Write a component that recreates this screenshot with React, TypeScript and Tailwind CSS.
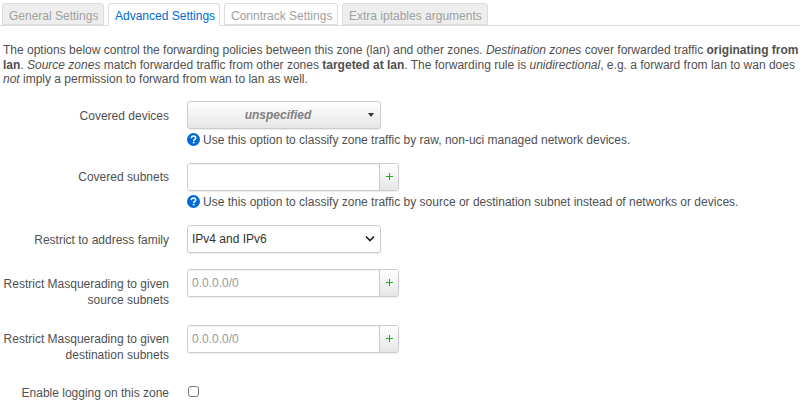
const FONT = "font-['Liberation_Sans',Arial,sans-serif]";

function Tab({ label, state, width }: { label: string; state: "active" | "idle" | "white"; width: string }) {
  if (state === "active") {
    return (
      <div className={`h-[23px] -mb-px pl-[6px] pt-[4px] rounded-t-[3px] border border-[#ddd] border-b-white bg-white text-[#0069d6] leading-[16px] whitespace-nowrap ${width}`}>
        {label}
      </div>
    );
  }
  return (
    <div className={`h-[22px] pl-[6px] pt-[4px] rounded-t-[3px] border border-[#ddd] text-[#a0a0a0] leading-[16px] whitespace-nowrap ${width} ${state === "white" ? "bg-white" : "bg-[#eeeeee]"}`}>
      {label}
    </div>
  );
}

function Row({ label, children, className, labelClass }: { label: React.ReactNode; children: React.ReactNode; className?: string; labelClass?: string }) {
  return (
    <div className={`flex ${className ?? ""}`}>
      <div className={`w-[169px] shrink-0 text-right text-[#505050] leading-[16.5px] whitespace-nowrap ${labelClass ?? "pt-[6px]"}`}>{label}</div>
      <div className="ml-[18px]">{children}</div>
    </div>
  );
}

function Help({ text }: { text: string }) {
  return (
    <div className="flex items-center h-[14px] mt-[4px] text-[#505050] whitespace-nowrap">
      <svg width="13" height="13" viewBox="0 0 13 13" className="shrink-0 mr-[3px]">
        <circle cx="6.5" cy="6.5" r="6.5" fill="#0069d6" />
        <path d="M4.3 5.1C4.4 3.8 5.3 3.1 6.5 3.1C7.8 3.1 8.7 3.8 8.7 4.9C8.7 6.4 6.7 6.4 6.7 7.9" fill="none" stroke="#fff" strokeWidth="1.5" />
        <rect x="5.8" y="8.8" width="1.7" height="1.6" fill="#fff" />
      </svg>
      {text}
    </div>
  );
}

function AddInput({ placeholder }: { placeholder?: string }) {
  return (
    <div className="flex w-[212px] h-[28px] rounded-[3px] border border-[#ccc] shadow-[0_1px_1px_rgba(0,0,0,0.08)] overflow-hidden">
      <div className="w-[191px] px-[4px] leading-[26px] text-[#999] bg-white shadow-[inset_0_1px_2px_rgba(0,0,0,0.06)]">{placeholder}</div>
      <div className="flex-1 border-l border-[#ccc] bg-gradient-to-b from-white to-[#e6e6e6] flex items-center justify-center">
        <svg width="9" height="9" viewBox="0 0 9 9">
          <path d="M4.5 1V8M1 4.5H8" stroke="#2ea62e" strokeWidth="1" fill="none" />
        </svg>
      </div>
    </div>
  );
}

export default function App() {
  return (
    <div className={`w-[800px] h-[404px] overflow-hidden bg-white text-[12px] ${FONT}`}>
      <div className="flex gap-[4px] h-[26px] pt-[3px] pl-[2px] border-b border-[#ddd]">
        <Tab label="General Settings" state="idle" width="w-[102px]" />
        <Tab label="Advanced Settings" state="active" width="w-[112px]" />
        <Tab label="Conntrack Settings" state="white" width="w-[114px]" />
        <Tab label="Extra iptables arguments" state="idle" width="w-[146px]" />
      </div>

      <p className="mt-[17px] pl-[3px] w-[800px] text-[#505050] leading-[14.5px] whitespace-nowrap">
        The options below control the forwarding policies between this zone (lan) and other zones. <em>Destination zones</em> cover forwarded traffic <strong>originating from</strong>
        <br />
        <strong>lan</strong>. <em>Source zones</em> match forwarded traffic from other zones <strong>targeted at lan</strong>. The forwarding rule is <em>unidirectional</em>, e.g. a forward from lan to wan does
        <br />
        <em>not</em> imply a permission to forward from wan to lan as well.
      </p>

      <Row label="Covered devices" className="mt-[14px]" labelClass="pt-[7px]">
        <div className="w-[194px] h-[28px] rounded-[3px] border border-[#ccc] bg-gradient-to-b from-white to-[#e6e6e6] flex items-center relative shadow-[0_1px_1px_rgba(0,0,0,0.08)]">
          <span className="w-[180px] text-center italic font-bold text-[#808080]">unspecified</span>
          <span className="absolute right-[6px] top-[11px] w-0 h-0 border-x-[3px] border-x-transparent border-t-[4px] border-t-[#333]" />
        </div>
        <Help text="Use this option to classify zone traffic by raw, non-uci managed network devices." />
      </Row>

      <Row label="Covered subnets" className="mt-[16px]">
        <AddInput />
        <Help text="Use this option to classify zone traffic by source or destination subnet instead of networks or devices." />
      </Row>

      <Row label="Restrict to address family" className="mt-[16px]" labelClass="pt-[7px]">
        <div className="w-[194px] h-[28px] rounded-[3px] border border-[#ccc] bg-white flex items-center justify-between pl-[4px] pr-[5px] text-[#333] shadow-[0_1px_1px_rgba(0,0,0,0.08)]">
          IPv4 and IPv6
          <svg width="10" height="7" viewBox="0 0 10 7">
            <path d="M1 1.5L5 5.5L9 1.5" fill="none" stroke="#222" strokeWidth="1.7" />
          </svg>
        </div>
      </Row>

      <Row label={<>Restrict Masquerading to given<br />source subnets</>} className="mt-[16px]" labelClass="pt-[7px]">
        <AddInput placeholder="0.0.0.0/0" />
      </Row>

      <Row label={<>Restrict Masquerading to given<br />destination subnets</>} className="mt-[16px]">
        <AddInput placeholder="0.0.0.0/0" />
      </Row>

      <Row label="Enable logging on this zone" className="mt-[15px]">
        <div className="w-[11px] h-[11px] mt-[7px] ml-px rounded-[3px] border border-[#777] bg-white" />
      </Row>
    </div>
  );
}
